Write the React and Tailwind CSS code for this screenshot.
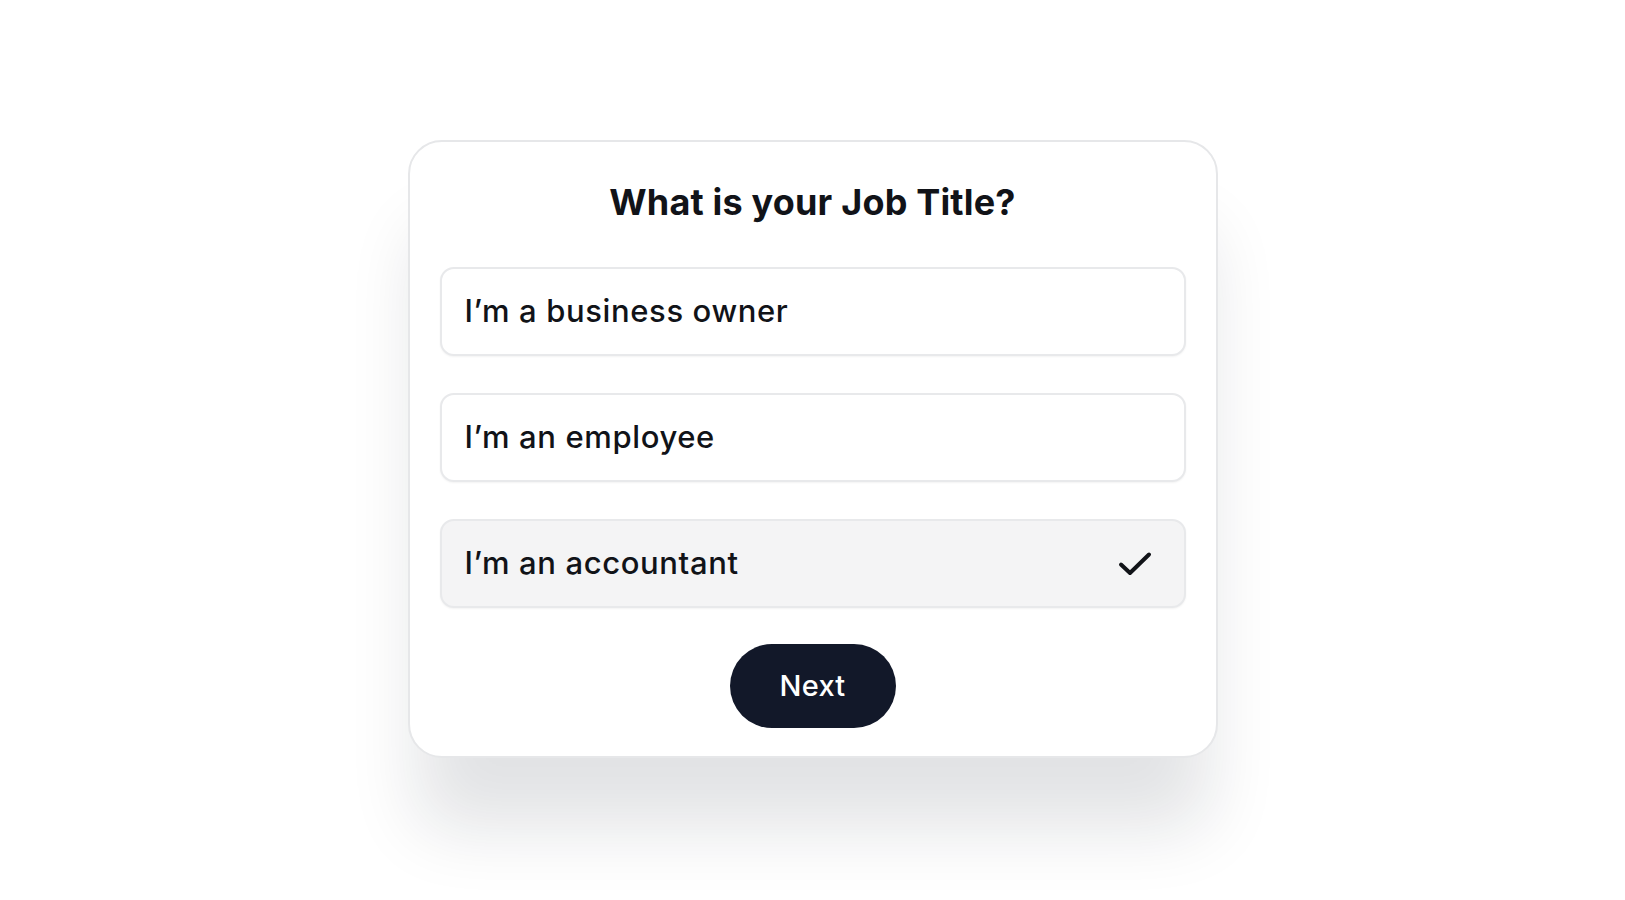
import React from "react";

const options = [
  { label: "I’m a business owner", selected: false },
  { label: "I’m an employee", selected: false },
  { label: "I’m an accountant", selected: true },
];

export default function App() {
  return (
    <div
      className="w-full h-[900px] bg-white flex justify-center items-start pt-[140px]"
      style={{ fontFamily: "Inter, 'Noto Sans', sans-serif" }}
    >
      <div className="w-[810px] bg-white border-2 border-[#e6e7e9] rounded-[34px] shadow-[0_80px_70px_-10px_rgba(17,24,39,0.12)] px-[30px] pt-[40px] pb-[28px] flex flex-col items-center">
        <h1 className="text-[36px] leading-[40px] font-bold text-[#111318] tracking-[0.005em]">
          What is your Job Title?
        </h1>
        <div className="w-full mt-[45px] flex flex-col gap-[37px]">
          {options.map((o) => (
            <div
              key={o.label}
              className={`h-[89px] rounded-[14px] border-2 border-[#e8e9eb] shadow-[0_1px_2px_rgba(0,0,0,0.05)] flex items-center justify-between pl-[23px] pr-[32px] ${
                o.selected ? "bg-[#f4f4f5]" : "bg-white"
              }`}
            >
              <span className="text-[31px] font-medium text-[#111318] tracking-[0.02em]">
                {o.label}
              </span>
              {o.selected && (
                <svg width="34" height="26" viewBox="0 0 34 26" fill="none">
                  <path
                    d="M3 13.5 L12 22 L31 3.5"
                    stroke="#111318"
                    strokeWidth="4"
                    strokeLinecap="round"
                    strokeLinejoin="round"
                  />
                </svg>
              )}
            </div>
          ))}
        </div>
        <button className="mt-[36px] w-[166px] h-[84px] rounded-full bg-[#121829] text-white text-[29px] font-medium tracking-[0.01em] flex items-center justify-center">
          Next
        </button>
      </div>
    </div>
  );
}
